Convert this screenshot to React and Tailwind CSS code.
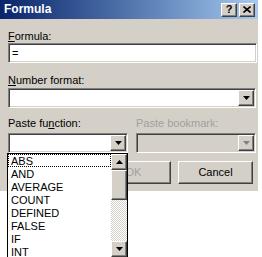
import React from "react";

const raised =
  "border border-t-white border-l-white border-r-[#404040] border-b-[#404040] shadow-[inset_-1px_-1px_0_#808080,inset_1px_1px_0_#d4d0c8]";
const sunken =
  "border border-t-[#808080] border-l-[#808080] border-r-white border-b-white shadow-[inset_1px_1px_0_#404040,inset_-1px_-1px_0_#d4d0c8]";

function Arrow({ up = false, disabled = false }) {
  return (
    <svg width="7" height="4" viewBox="0 0 7 4" className={up ? "rotate-180" : ""}>
      <path d="M0 0h7L3.5 4z" fill={disabled ? "#808080" : "#000"} />
    </svg>
  );
}

function DropButton({ disabled }) {
  return (
    <div className={`w-[16px] h-[16px] flex items-center justify-center bg-[#d4d0c8] ${raised}`}>
      <Arrow disabled={disabled} />
    </div>
  );
}

function Combo({ width, disabled = false }) {
  return (
    <div
      className={`h-[20px] flex items-center justify-end pr-[1px] ${sunken} ${
        disabled ? "bg-[#d4d0c8]" : "bg-white"
      }`}
      style={{ width }}
    >
      <DropButton disabled={disabled} />
    </div>
  );
}

const functions = ["ABS", "AND", "AVERAGE", "COUNT", "DEFINED", "FALSE", "IF", "INT"];

export default function App() {
  return (
    <div className="relative w-[262px] h-[257px] overflow-hidden bg-white font-['Liberation_Sans',sans-serif] text-[11px] leading-[13px] text-black">
      <div className="w-[259px] bg-[#d4d0c8] border-r border-white">
        {/* title bar */}
        <div className="h-[19px] flex items-center pl-[4px] pr-[3px] bg-gradient-to-r from-[#0a246a] to-[#a6caf0]">
          <span className="text-white font-bold text-[12px] flex-1">Formula</span>
          <div className={`w-[16px] h-[14px] flex items-center justify-center bg-[#d4d0c8] font-bold text-[11px] ${raised}`}>
            ?
          </div>
          <div className={`ml-[2px] w-[16px] h-[14px] flex items-center justify-center bg-[#d4d0c8] ${raised}`}>
            <svg width="8" height="7" viewBox="0 0 8 7">
              <path d="M0.5 0.5L7.5 6.5M7.5 0.5L0.5 6.5" stroke="#000" strokeWidth="1.6" />
            </svg>
          </div>
        </div>

        <div className="pl-[8px] pb-[7px]">
          <div className="mt-[11px]">
            <span className="underline">F</span>ormula:
          </div>
          <div className={`w-[249px] h-[20px] bg-white flex items-center pl-[3px] ${sunken}`}>=</div>

          <div className="mt-[11px]">
            <span className="underline">N</span>umber format:
          </div>
          <div className="mt-[1px]">
            <Combo width={248} />
          </div>

          <div className="mt-[9px] flex">
            <div className="w-[128px]">
              Paste fu<span className="underline">n</span>ction:
            </div>
            <div className="text-[#a0a0a0]">Paste bookmark:</div>
          </div>
          <div className="mt-[3px] flex gap-[8px]">
            <Combo width={120} />
            <Combo width={120} disabled />
          </div>

          <div className="mt-[8px] flex justify-end gap-[7px] pr-[5px]">
            <div className={`w-[75px] h-[23px] flex items-center justify-center text-[#a0a0a0] ${raised}`}>OK</div>
            <div className={`w-[75px] h-[23px] flex items-center justify-center ${raised}`}>Cancel</div>
          </div>
        </div>
      </div>

      {/* open dropdown list */}
      <div className="absolute left-[7px] top-[153px] w-[121px] h-[106px] bg-white border border-black flex">
        <div className="flex-1 overflow-hidden">
          {functions.map((f, i) => (
            <div
              key={f}
              className={`h-[13px] pl-[2px] leading-[12px] ${
                i === 0 ? "border border-dotted border-black" : "border border-transparent"
              }`}
            >
              {f}
            </div>
          ))}
        </div>
        <div className="w-[16px] flex flex-col">
          <div className={`h-[16px] flex items-center justify-center bg-[#d4d0c8] ${raised}`}>
            <Arrow up />
          </div>
          <div className={`h-[30px] bg-[#d4d0c8] ${raised}`} />
          <div className="flex-1 bg-[repeating-conic-gradient(#d4d0c8_0_25%,#fff_0_50%)] bg-[length:2px_2px]" />
          <div className={`h-[16px] mb-[1px] flex items-center justify-center bg-[#d4d0c8] ${raised}`}>
            <Arrow />
          </div>
        </div>
      </div>
    </div>
  );
}
